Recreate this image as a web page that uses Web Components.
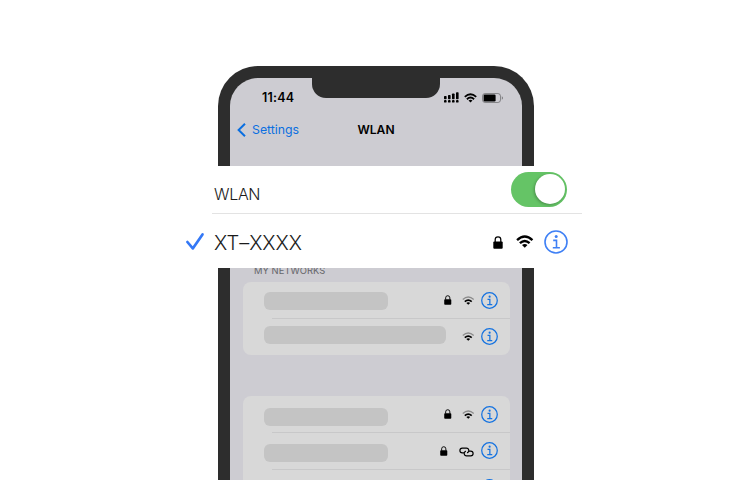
<!DOCTYPE html>
<html lang="en">
<head>
<meta charset="utf-8">
<title>WLAN</title>
<style>
html, body { margin: 0; background: #fff; }
body { width: 750px; height: 480px; overflow: hidden; font-family: Inter, "Liberation Sans", sans-serif; }
</style>
</head>
<body>
<wlan-stage></wlan-stage>
<script>
const define = (name, html, setup) => {
  const t = document.createElement('template');
  t.innerHTML = html;
  customElements.define(name, class extends HTMLElement {
    constructor() {
      super();
      this.attachShadow({ mode: 'open' }).appendChild(t.content.cloneNode(true));
    }
    connectedCallback() { if (setup) setup(this, this.shadowRoot); }
  });
};

const wifi = (outer) => `<svg viewBox="0 0 18 13" fill="none" stroke="currentColor" stroke-width="2.5">
  <path d="M1.1 5 Q9 -2.2 16.9 5" ${outer}/>
  <path d="M4 8.2 Q9 3.6 14 8.2"/><path d="M9 12.8 L6.2 10 Q9 7.9 11.8 10 Z" fill="currentColor" stroke="none"/></svg>`;
const icons = {
  signal: `<svg viewBox="0 0 15 11" fill="currentColor">
    <rect x="0" y="4" width="2.6" height="3.2" rx=".7"/><rect x="4" y="3" width="2.6" height="4.2" rx=".7"/>
    <rect x="8" y="1.6" width="2.6" height="5.6" rx=".7"/><rect x="12" y=".2" width="2.6" height="7" rx=".7"/>
    <rect x="0" y="8" width="2.6" height="2.6" rx=".9"/><rect x="4" y="8" width="2.6" height="2.6" rx=".9"/>
    <rect x="8" y="8" width="2.6" height="2.6" rx=".9"/><rect x="12" y="8" width="2.6" height="2.6" rx=".9"/></svg>`,
  wifi: wifi(''),
  'wifi-weak': wifi('stroke-opacity=".35" stroke-width="1.9"'),
  battery: `<svg viewBox="0 0 21 10"><rect x=".5" y=".5" width="18" height="9" rx="2.6" fill="none" stroke="#000" stroke-opacity=".35"/>
    <rect x="1.6" y="1.6" width="12" height="6.8" rx="1.2"/><path d="M19.8 3.3 Q21 4 21 5 Q21 6 19.8 6.7 Z" fill="#000" fill-opacity=".4"/></svg>`,
  lock: `<svg viewBox="0 0 10 13"><rect x=".3" y="5.6" width="9.4" height="7.2" rx="1"/>
    <path d="M2.2 6 V3.6 A2.8 2.8 0 0 1 7.8 3.6 V6" fill="none" stroke="#000" stroke-width="1.25"/></svg>`,
  info: `<svg viewBox="0 0 24 24" fill="none" stroke="currentColor" stroke-width="var(--sw, 1.6)"><circle cx="12" cy="12" r="11"/>
    <path d="M9.2 10.4 H12.5 V17.7 M8.8 17.7 H15.9"/><circle cx="12.2" cy="6.6" r="1.5" fill="currentColor" stroke="none"/></svg>`,
  back: `<svg viewBox="0 0 9 14" fill="none" stroke="currentColor" stroke-width="2"><path d="M8 .7 L1.6 7 L8 13.3"/></svg>`,
  check: `<svg viewBox="0 0 18 17" fill="none" stroke="currentColor" stroke-width="2.7" stroke-linecap="round" stroke-linejoin="round"><path d="M1.4 9 L6.8 15.4 L16.5 1.4"/></svg>`,
  link: `<svg viewBox="0 0 15 10" fill="none" stroke="#000" stroke-width="1.2" stroke-linecap="round">
    <path d="M4.6 5.9 H3.3 A2.4 2.4 0 0 1 3.3 1.1 H7.4 A2.4 2.4 0 0 1 8.6 5.6"/>
    <path d="M10.4 4.1 H11.7 A2.4 2.4 0 0 1 11.7 8.9 H7.6 A2.4 2.4 0 0 1 6.4 4.4"/></svg>`
};
define('ui-icon', `<style>:host{display:block;flex:none}svg{display:block;width:100%;height:100%;overflow:visible}</style>`, (el, root) => {
  root.innerHTML += icons[el.getAttribute('name')];
});

define('ui-toggle', `<style>
:host{display:flex;justify-content:flex-end;box-sizing:border-box;width:56.5px;height:34.5px;padding:2.2px;border-radius:17.5px;background:#65c466}
i{width:30px;height:30px;border-radius:50%;background:#fff;box-shadow:-1px 1px 3px #0004}
</style><i></i>`);

define('status-bar', `<style>
:host{display:flex;align-items:flex-start;height:20px;color:#000}
time{width:82px;box-sizing:border-box;padding:11.5px 0 0 32px;font-size:12.5px;line-height:16px;font-weight:600;letter-spacing:.2px;white-space:nowrap}
.notch{width:128px;height:20px;background:#2d2d2d;border-radius:0 0 14px 14px}
.right{display:flex;align-items:center;padding:14px 0 0 4px}
.s{width:15px;height:11px}.w{width:13px;height:10px;margin-left:4.5px}.b{width:21px;height:10px;margin-left:5px}
</style><time>11:44</time><div class="notch"></div><div class="right"><ui-icon class="s" name="signal"></ui-icon><ui-icon class="w" name="wifi"></ui-icon><ui-icon class="b" name="battery"></ui-icon></div>`);

define('nav-bar', `<style>
:host{display:grid;grid-template-columns:1fr auto 1fr;align-items:center;height:20px;margin-top:22px;padding:0 7px;font-size:12.3px;line-height:20px}
.back{display:flex;align-items:center;gap:6px;color:#0b6fe0}
ui-icon{width:9px;height:14px}
b{font-weight:600;color:#000;font-size:12.1px}
</style><div class="back"><ui-icon name="back"></ui-icon><slot name="back"></slot></div><b><slot></slot></b><span></span>`);

define('network-row', `<style>
:host{display:flex;align-items:center;box-sizing:border-box;height:36.5px;padding:0 12px 0 21.5px;position:relative}
:host(:not(:last-child))::after{content:"";position:absolute;left:29.5px;right:0;bottom:-.5px;height:1px;background:#c8c8c9}
.bar{width:var(--w,124px);height:18px;border-radius:6px;background:#c4c4c4;margin-top:var(--dy,0)}
:host([bare]) .bar{display:none}
.icons{display:flex;align-items:center;margin-left:auto}
.lock{width:7.5px;height:10px}.sig{width:12.5px;height:9px;margin:0 6.5px 0 10.5px}
.link{width:15px;height:10px;margin:2px 7px 0 11.5px}
.info{width:17px;height:17px;color:#1673e0;--sw:1.8}
</style><div class="bar"></div><div class="icons"></div>`, (el, root) => {
  const linked = el.hasAttribute('linked');
  root.querySelector('.icons').innerHTML =
    (el.hasAttribute('open') ? '' : '<ui-icon class="lock" name="lock"></ui-icon>') +
    (linked ? '<ui-icon class="link" name="link"></ui-icon>' : '<ui-icon class="sig" name="wifi-weak"></ui-icon>') +
    '<ui-icon class="info" name="info"></ui-icon>';
});

define('network-list', `<style>:host{display:block;width:267.5px;margin-left:12.5px;border-radius:8px;background:#d8d8d8;overflow:hidden}</style><slot></slot>`);

define('phone-frame', `<style>
:host{display:block;box-sizing:border-box;width:316px;height:500px;border:12px solid #2d2d2d;border-bottom:0;border-radius:40px 40px 0 0;background:#2d2d2d}
.screen{height:100%;border-radius:28px 28px 0 0;background:#cdccd2;overflow:hidden}
</style><div class="screen"><slot></slot></div>`);

define('focus-panel', `<style>
:host{position:absolute;left:150px;top:166px;width:450px;height:102px;background:#fff;color:#1b1b1b;font-weight:300;font-feature-settings:"calt" 0}
.row{display:flex;align-items:center;box-sizing:border-box}
.top{height:47px;margin:0 18px 0 62px;padding:0 15px 0 2px;font-size:16px}
.top span{padding-top:9px;letter-spacing:-.3px}
ui-toggle{margin:0 0 0 auto}
hr{height:1px;border:0;margin:0 18px 0 62px;background:#e3e3e3}
.net{height:54px;padding:1px 32.3px 0 35.7px;font-size:20px}
.check{width:18px;height:17px;color:#3478f6}
.net span{margin-left:10.3px;padding-top:2px}
.lock{width:10px;height:13px;margin:2px 0 0 auto}
.wifi{width:17.5px;height:13px;margin:0 10px 0 13px;color:#000}
.info{width:24px;height:24px;color:#3f80f5}
</style>
<div class="row top"><span><slot name="title"></slot></span><ui-toggle></ui-toggle></div><hr>
<div class="row net"><ui-icon class="check" name="check"></ui-icon><span><slot name="network"></slot></span>
<ui-icon class="lock" name="lock"></ui-icon><ui-icon class="wifi" name="wifi"></ui-icon><ui-icon class="info" name="info"></ui-icon></div>`);

define('wlan-stage', `<style>
:host{display:block;box-sizing:border-box;position:relative;width:750px;height:480px;padding:66px 0 0 218px;overflow:hidden}
h2{margin:124.5px 0 5.5px 24px;font-size:9.4px;line-height:12px;font-weight:400;color:#66666a;letter-spacing:.05px}
.second{margin-top:41px}
</style>
<phone-frame>
<status-bar></status-bar>
<nav-bar><span slot="back">Settings</span>WLAN</nav-bar>
<h2>MY NETWORKS</h2>
<network-list><network-row style="--dy:1.5px"></network-row><network-row open style="--w:182px;--dy:-4px"></network-row></network-list>
<network-list class="second"><network-row style="--dy:5px"></network-row><network-row linked style="--dy:4px"></network-row><network-row bare></network-row></network-list>
</phone-frame>
<focus-panel><span slot="title">WLAN</span><span slot="network">XT–XXXX</span></focus-panel>`);
</script>
</body>
</html>
